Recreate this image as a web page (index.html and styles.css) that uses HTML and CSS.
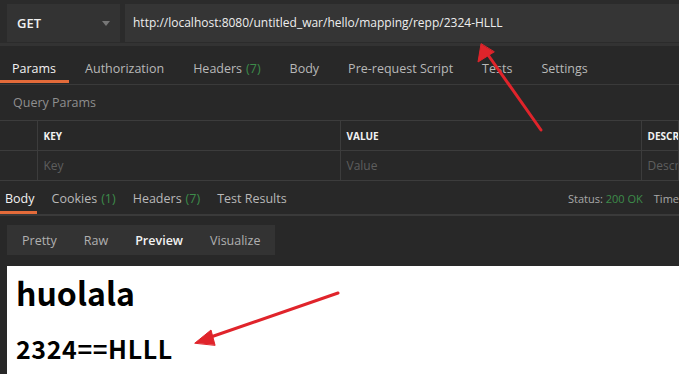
FILE: index.html
```html
<!DOCTYPE html>
<html lang="en">
<head>
  <meta charset="UTF-8">
  <title>Request</title>
  <link rel="stylesheet" href="styles.css">
</head>
<body>
  <div class="request-bar">
    <div class="method-select">
      <span>GET</span>
      <span class="caret"></span>
    </div>
    <div class="url-input">http://localhost:8080/untitled_war/hello/mapping/repp/2324-HLLL</div>
  </div>

  <div class="tabs req-tabs">
    <span class="tab active">Params</span>
    <span class="tab">Authorization</span>
    <span class="tab">Headers <em>(7)</em></span>
    <span class="tab">Body</span>
    <span class="tab">Pre-request Script</span>
    <span class="tab">Tests</span>
    <span class="tab">Settings</span>
  </div>

  <div class="section-title">Query Params</div>
  <table class="params-table">
    <colgroup>
      <col class="check-col">
      <col class="key-col">
      <col class="value-col">
      <col>
    </colgroup>
    <tr class="head">
      <td></td>
      <td>KEY</td>
      <td>VALUE</td>
      <td>DESCRIPTION</td>
    </tr>
    <tr class="placeholder">
      <td></td>
      <td>Key</td>
      <td>Value</td>
      <td>Description</td>
    </tr>
  </table>

  <div class="tabs res-tabs">
    <span class="tab active">Body</span>
    <span class="tab">Cookies <em>(1)</em></span>
    <span class="tab">Headers <em>(7)</em></span>
    <span class="tab">Test Results</span>
    <span class="status first">Status: <em>200 OK</em></span>
    <span class="status">Time</span>
  </div>

  <div class="view-switch">
    <span>Pretty</span>
    <span>Raw</span>
    <span class="active">Preview</span>
    <span>Visualize</span>
  </div>

  <div class="preview">
    <h1>huolala</h1>
    <h2>2324==HLLL</h2>
  </div>

  <svg class="arrows" width="679" height="374" viewBox="0 0 679 374">
    <g stroke="#e0242b" stroke-width="3" stroke-linecap="round" fill="#e0242b">
      <line x1="541" y1="130" x2="486" y2="52"/>
      <polygon points="481,44 478,62 494,52" stroke-width="1"/>
      <line x1="338" y1="293" x2="205" y2="339"/>
      <polygon points="195,343 211,330 215,345" stroke-width="1"/>
    </g>
  </svg>
</body>
</html>
```
FILE: styles.css
```css
body {
  margin: 0;
  width: 679px;
  height: 374px;
  overflow: hidden;
  background-color: #282828;
  font-family: "Open Sans", "Noto Sans", sans-serif;
  font-size: 12.5px;
  color: #d0d0d0;
  position: relative;
}
.request-bar {
  display: flex;
  gap: 5px;
  height: 46px;
  padding: 4px 0 0 7px;
  box-sizing: border-box;
  background-color: #2b2b2b;
  border-bottom: 3px solid #333;
}
.method-select {
  width: 113px;
  height: 38px;
  background-color: #333;
  display: flex;
  align-items: center;
  justify-content: space-between;
  padding: 0 10px;
  box-sizing: border-box;
  color: #f0f0f0;
  font-weight: 600;
  font-size: 13px;
}
.caret {
  width: 0;
  height: 0;
  border-left: 4px solid transparent;
  border-right: 4px solid transparent;
  border-top: 5px solid #777;
}
.url-input {
  flex: 1;
  height: 38px;
  line-height: 38px;
  background-color: #353535;
  padding-left: 8px;
  color: #eee;
  font-size: 12px;
}
.tabs {
  display: flex;
  align-items: center;
  border-bottom: 1px solid #3a3a3a;
}
.req-tabs {
  height: 36px;
  margin-top: 3px;
  padding: 3px 0 0 12px;
  box-sizing: border-box;
  gap: 29px;
}
.tab {
  position: relative;
  height: 100%;
  display: flex;
  align-items: center;
  color: #b8b8b8;
  white-space: nowrap;
}
.tab em {
  font-style: normal;
  color: #3d8c4a;
  margin-left: 4px;
}
.tab.active {
  color: #f2f2f2;
}
.tab.active::after {
  content: "";
  position: absolute;
  left: -12px;
  right: -13px;
  bottom: 1px;
  height: 3px;
  background-color: #e46b3a;
}
.section-title {
  height: 35px;
  line-height: 36px;
  padding-left: 13px;
  color: #8f8f8f;
}
.params-table {
  width: 100%;
  border-collapse: collapse;
  table-layout: fixed;
}
.check-col {
  width: 37px;
}
.key-col {
  width: 303px;
}
.value-col {
  width: 301px;
}
.params-table td {
  height: 29px;
  border: 1px solid #3c3c3c;
  padding: 0 6px;
  white-space: nowrap;
  overflow: hidden;
  font-size: 10px;
}
.params-table tr td:first-child {
  border-left: none;
}
.head td {
  color: #f2f2f2;
  font-weight: 700;
}
.placeholder td {
  color: #5e5e5e;
  font-size: 12px;
}
.res-tabs {
  height: 32px;
  margin-top: 1px;
  padding-left: 5px;
  gap: 17px;
  border-bottom: 2px solid #3a3a3a;
}
.res-tabs .tab.active::after {
  left: -5px;
  right: -2px;
  bottom: 0;
}
.status {
  font-size: 11px;
  color: #a8a8a8;
}
.status.first {
  margin-left: auto;
  margin-right: -6px;
}
.status em {
  font-style: normal;
  color: #3d8c4a;
}
.view-switch {
  display: flex;
  width: 268px;
  height: 30px;
  margin: 9px 0 0 7px;
  background-color: #333;
  align-items: center;
  padding-left: 15px;
  box-sizing: border-box;
}
.view-switch span {
  color: #b0b0b0;
  margin-right: 27px;
}
.view-switch span.active {
  color: #f2f2f2;
  font-weight: 600;
}
.preview {
  margin: 11px 0 0 7px;
  height: 110px;
  box-sizing: border-box;
  background-color: #fff;
  padding: 6px 9px 0;
  color: #000;
  font-family: "Noto Sans CJK SC", "Noto Sans", sans-serif;
}
.preview h1 {
  margin: 0;
  font-size: 32px;
  line-height: 40px;
  font-weight: 700;
}
.preview h2 {
  margin: 20px 0 0;
  font-size: 25px;
  line-height: 32px;
  font-weight: 700;
  letter-spacing: 0.6px;
}
.arrows {
  position: absolute;
  left: 0;
  top: 0;
}
```
